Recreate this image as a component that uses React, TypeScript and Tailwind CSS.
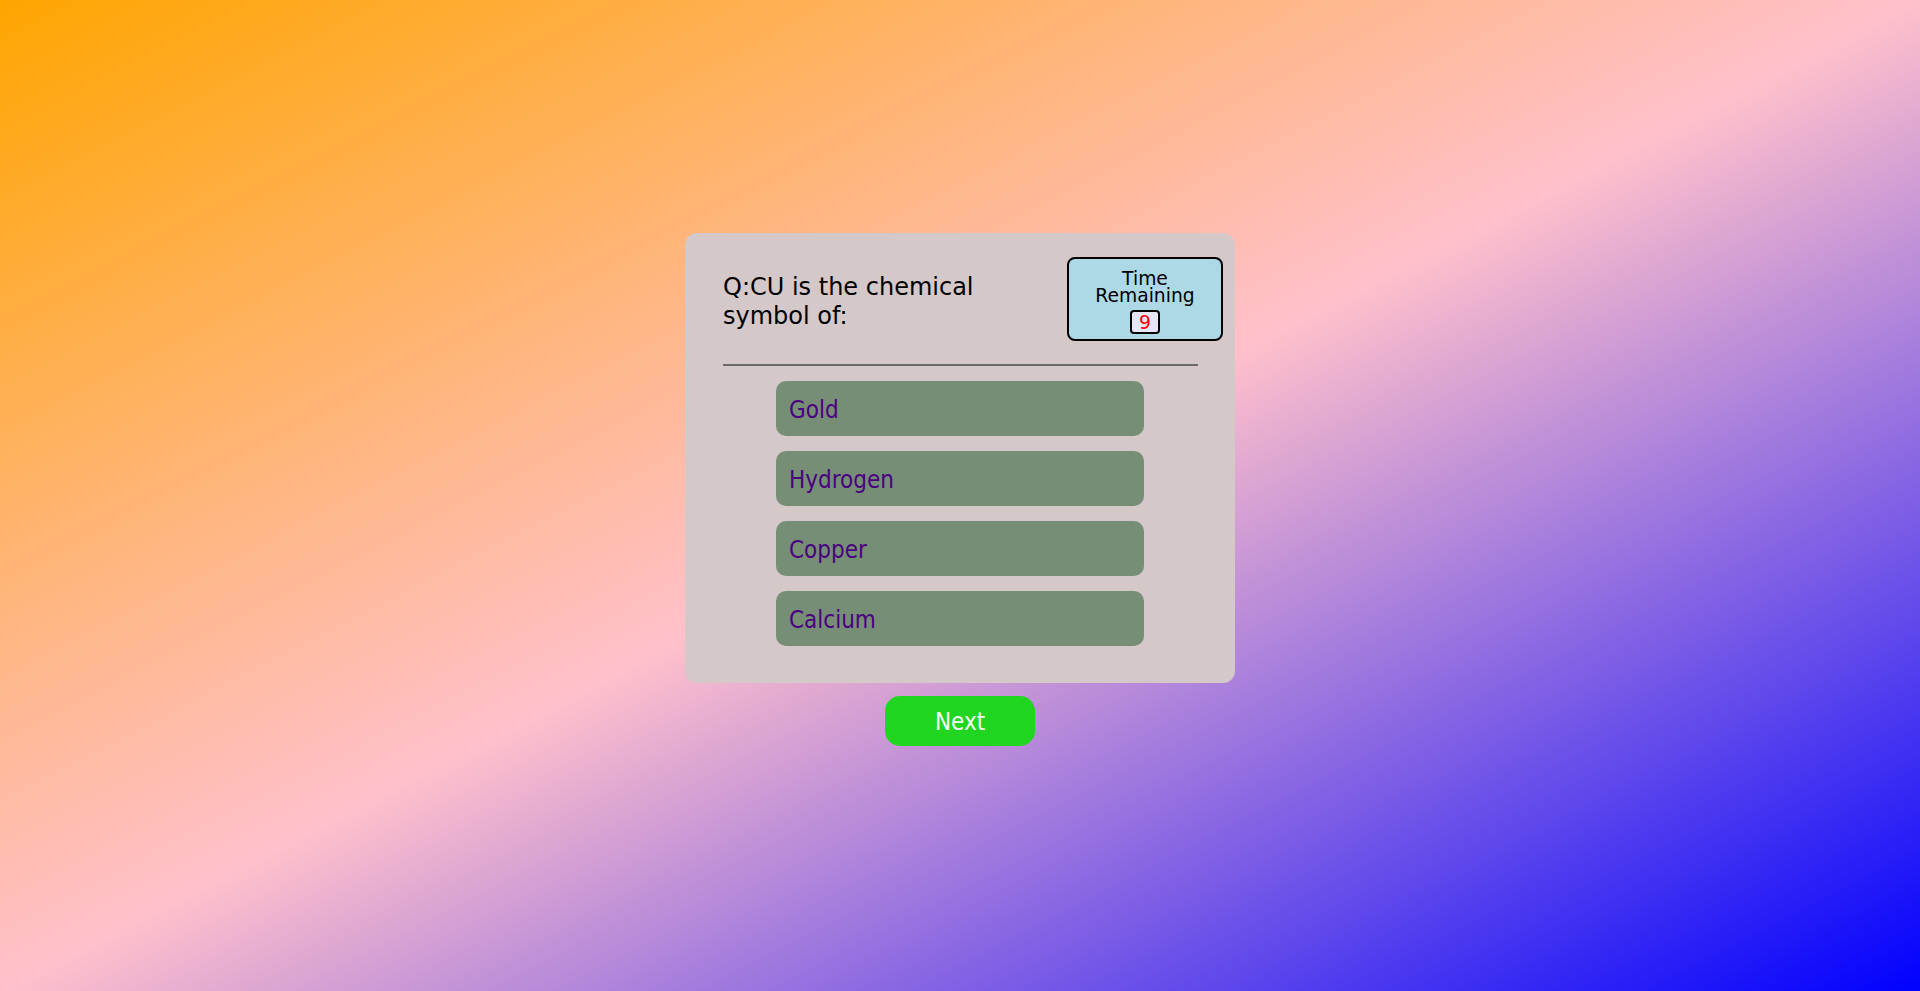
import React from "react";

const options = ["Gold", "Hydrogen", "Copper", "Calcium"];

function Timer({ seconds }: { seconds: number }) {
  return (
    <div className="flex h-[84px] w-[156px] shrink-0 flex-col items-center rounded-lg border-2 border-black bg-[#add8e6] pt-[11px] font-['DejaVu_Sans',Verdana,sans-serif] text-[18.72px] leading-[17px] text-black">
      <span>Time</span>
      <span>Remaining</span>
      <span className="mt-[6px] flex h-6 w-[30px] items-center justify-center rounded border-2 border-black bg-[#e6e6fa] text-[#ff0000]">
        {seconds}
      </span>
    </div>
  );
}

export default function App() {
  return (
    <div className="flex min-h-screen flex-col items-center justify-center bg-[linear-gradient(to_bottom_right,#ffa500,#ffc0cb,#0000ff)] pb-3">
      <div className="flex w-[550px] flex-col rounded-xl bg-[#d4c8c8] pt-6 pb-[37px]">
        <div className="flex items-center justify-between pr-3 pl-[38px]">
          <p className="w-[290px] pt-[5px] font-['DejaVu_Sans',Verdana,sans-serif] text-2xl leading-[29px] text-black">
            Q:CU is the chemical symbol of:
          </p>
          <Timer seconds={9} />
        </div>

        <div className="mx-auto mt-[23px] h-[2px] w-[475px] bg-[#6a6a6a]" />

        <ul className="mt-[15px] flex flex-col items-center gap-[15px]">
          {options.map((opt) => (
            <li key={opt}>
              <button className="flex h-[55px] w-[368px] items-center rounded-[10px] bg-[#758e75] pt-[2px] pl-[13px] font-['DejaVu_Sans_Condensed','DejaVu_Sans',sans-serif] text-2xl text-[#4b0082]">
                {opt}
              </button>
            </li>
          ))}
        </ul>
      </div>

      <button className="mt-[13px] h-[50px] w-[150px] rounded-[15px] bg-[#21d621] pt-[2px] font-['DejaVu_Sans_Condensed','DejaVu_Sans',sans-serif] text-2xl text-[#f5fff5]">
        Next
      </button>
    </div>
  );
}
